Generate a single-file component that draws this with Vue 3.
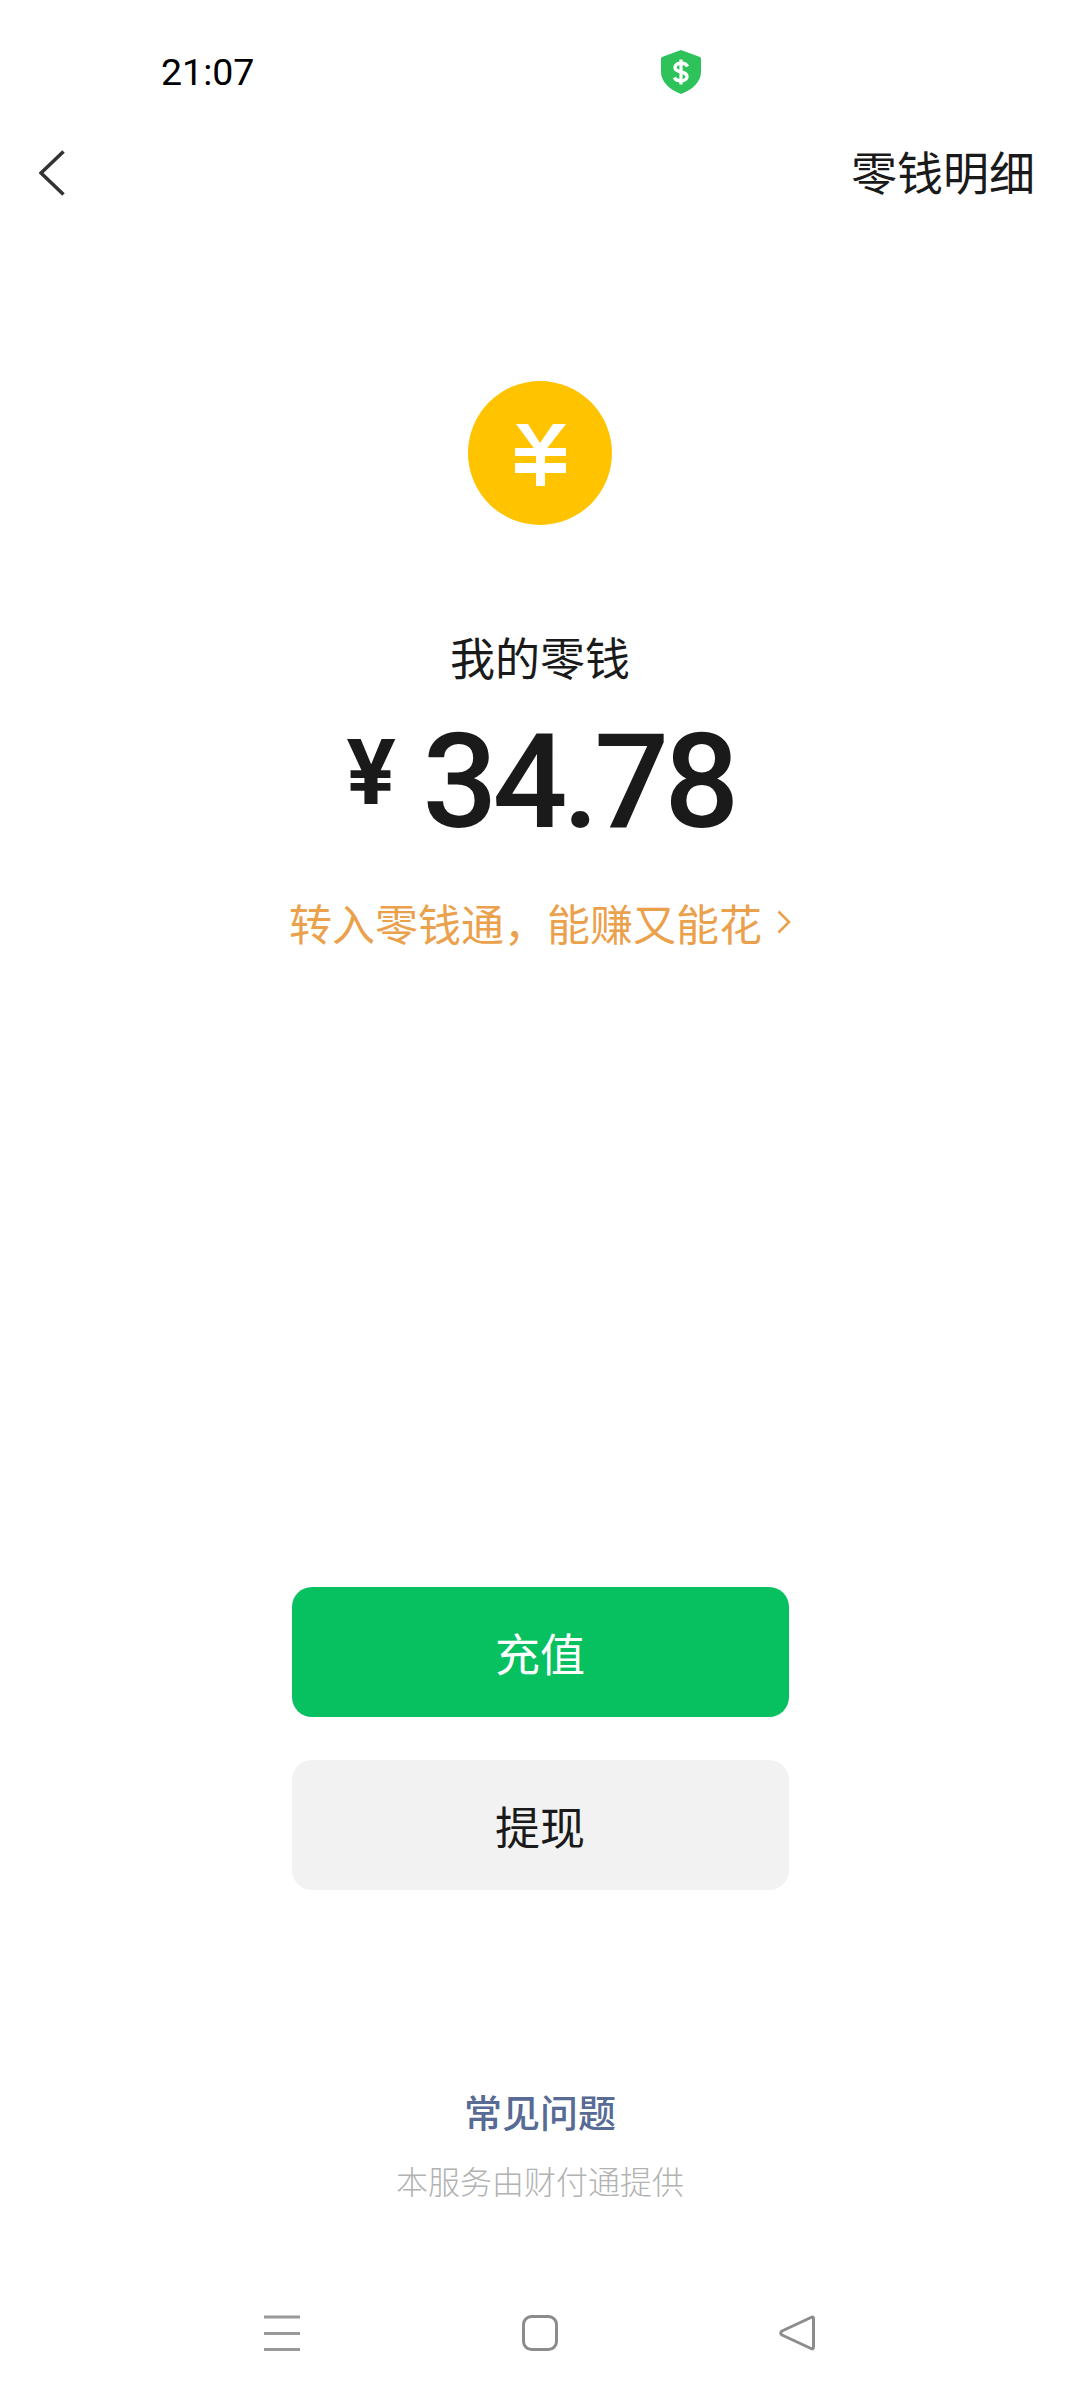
<script setup>
const title = '零钱明细'
</script>

<template>
  <div class="page">
    <div class="status">
      <span class="time">21:07</span>
      <svg class="shield" viewBox="0 0 40 44" width="40" height="44" aria-hidden="true">
        <path d="M20 0 L39 7 Q40 7.5 40 9 L40 22 C40 32 31 40 20 44 C9 40 0 32 0 22 L0 9 Q0 7.5 1 7 Z" fill="#2DC35A"/>
        <path d="M26.5 16.5 C25.5 14 23 13.2 20 13.2 C16.5 13.2 14 14.8 14 17.6 C14 20.4 16.5 21.2 20 22 C23.5 22.8 26 23.6 26 26.4 C26 29.2 23.5 30.8 20 30.8 C17 30.8 14.5 30 13.5 27.5" fill="none" stroke="#fff" stroke-width="3.4"/>
        <path d="M20 9.5 V34.5" stroke="#fff" stroke-width="3.2"/>
      </svg>
    </div>

    <header class="nav">
      <svg class="back" viewBox="0 0 26 46" width="26" height="46" aria-hidden="true">
        <path d="M24.5 1.5 L2 23 L24.5 44.5" fill="none" stroke="#333" stroke-width="3.6"/>
      </svg>
      <span class="nav-title">{{ title }}</span>
    </header>

    <main class="balance">
      <svg class="coin" viewBox="0 0 144 144" width="144" height="144" aria-hidden="true">
        <circle cx="72" cy="72" r="72" fill="#FFC300"/>
        <path d="M48 43 H60 L72 62 L85 43 H98 L77 70 H68 Z" fill="#fff"/>
        <rect x="47" y="67" width="51" height="8" fill="#fff"/>
        <rect x="47" y="82" width="51" height="10" fill="#fff"/>
        <rect x="68" y="67" width="9" height="38" fill="#fff"/>
      </svg>
      <div class="label">我的零钱</div>
      <div class="amount">
        <span class="currency">¥</span>
        <span class="digits">34.78</span>
      </div>
      <div class="promo">
        <span>转入零钱通，能赚又能花</span>
        <svg class="promo-arrow" viewBox="0 0 14 24" width="14" height="24" aria-hidden="true">
          <path d="M1.5 1.5 L12 12 L1.5 22.5" fill="none" stroke="#EBA04B" stroke-width="2.6"/>
        </svg>
      </div>
    </main>

    <div class="actions">
      <button class="btn btn-primary">充值</button>
      <button class="btn btn-secondary">提现</button>
    </div>

    <footer class="foot">
      <div class="faq">常见问题</div>
      <div class="provider">本服务由财付通提供</div>
    </footer>

    <nav class="sysnav">
      <svg viewBox="0 0 36 36" width="36" height="36" aria-hidden="true">
        <path d="M0 2 H36 M0 18.500 H36 M0 34.500 H36" stroke="#999" stroke-width="3"/>
      </svg>
      <svg viewBox="0 0 36 36" width="36" height="36" aria-hidden="true">
        <rect x="1.500" y="1.500" width="33" height="33" rx="8" fill="none" stroke="#8c8c8c" stroke-width="3"/>
      </svg>
      <svg viewBox="0 0 36 36" width="36" height="36" aria-hidden="true">
        <path d="M33 2 Q34.500 1.800 34.500 4 V32 Q34.500 34.500 32 33.500 L3 20 Q0.500 18 3 16 Z" fill="none" stroke="#8c8c8c" stroke-width="3" stroke-linejoin="round"/>
      </svg>
    </nav>
  </div>
</template>

<style>
html, body { margin: 0; background: #fff; }
</style>

<style scoped>
.page {
  width: 1080px;
  height: 2400px;
  background: #fff;
  display: flex;
  flex-direction: column;
  font-family: "Noto Sans CJK SC", "Noto Sans", sans-serif;
  overflow: hidden;
  box-sizing: border-box;
  padding-top: 50px;
}
.status {
  height: 44px;
  display: flex;
  align-items: center;
  padding-left: 161px;
}
.time {
  font-family: Roboto, sans-serif;
  font-size: 37.5px;
  line-height: 44px;
  width: 500px;
  color: #000;
}
.nav {
  margin-top: 56px;
  height: 46px;
  display: flex;
  align-items: center;
  justify-content: space-between;
  padding: 0 45px 0 39px;
}
.nav-title {
  font-size: 46px;
  line-height: 46px;
  color: #1a1a1a;
  font-weight: 400;
  position: relative;
  top: -3px;
}
.balance {
  margin-top: 185px;
  display: flex;
  flex-direction: column;
  align-items: center;
}
.label {
  margin-top: 102px;
  font-size: 45px;
  line-height: 60px;
  color: #1a1a1a;
  font-weight: 400;
}
.amount {
  margin-top: 40px;
  height: 110px;
  display: flex;
  align-items: flex-start;
  color: #1a1a1a;
  font-family: Roboto, sans-serif;
  font-weight: 500;
}
.currency {
  font-family: Inter, sans-serif;
  font-size: 89px;
  line-height: 90px;
  font-weight: 700;
  margin-right: 26px;
}
.digits {
  font-size: 132px;
  line-height: 110px;
  letter-spacing: -5px;
}
.promo {
  margin-top: 55px;
  display: flex;
  align-items: center;
  gap: 15px;
  color: #EBA04B;
  font-size: 43px;
  line-height: 60px;
  font-weight: 400;
}
.actions {
  margin-top: 635px;
  display: flex;
  flex-direction: column;
  align-items: center;
  gap: 43px;
}
.btn {
  width: 497px;
  height: 130px;
  border: 0;
  border-radius: 20px;
  font-family: inherit;
  font-size: 45px;
  font-weight: 400;
  padding: 0;
}
.btn-primary { background: #07C160; color: #fff; }
.btn-secondary { background: #F2F2F2; color: #1a1a1a; }
.foot {
  margin-top: 196px;
  display: flex;
  flex-direction: column;
  align-items: center;
}
.faq {
  font-size: 38px;
  line-height: 50px;
  font-weight: 500;
  color: #576B95;
}
.provider {
  margin-top: 22px;
  font-size: 32px;
  line-height: 44px;
  color: #B2B2B2;
  font-weight: 300;
}
.sysnav {
  margin-top: 113px;
  display: flex;
  justify-content: space-between;
  padding: 0 265px 0 264px;
}
</style>
